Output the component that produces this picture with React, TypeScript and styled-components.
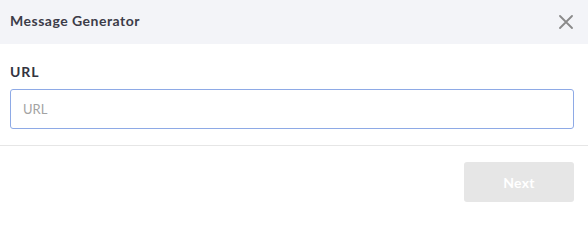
import React from "react";
import styled, { createGlobalStyle } from "styled-components";

const Global = createGlobalStyle`
  html, body { margin: 0; padding: 0; background: #ffffff; }
  body { font-family: "Lato", "Liberation Sans", sans-serif; }
  * { box-sizing: border-box; }
`;

const Modal = styled.div`
  width: 588px;
  height: 215px;
  display: flex;
  flex-direction: column;
  background: #ffffff;
`;

const Header = styled.div`
  height: 44px;
  background: #f3f4f8;
  display: flex;
  align-items: center;
  justify-content: space-between;
  padding: 0 15px 0 10px;
`;

const Title = styled.h2`
  margin: 0;
  font-size: 14px;
  font-weight: 700;
  color: #3c3c48;
  letter-spacing: 0.5px;
  line-height: 18px;
  padding-bottom: 2px;
`;

const CloseButton = styled.button`
  border: none;
  background: transparent;
  padding: 0;
  width: 14px;
  height: 14px;
  display: flex;
  align-items: center;
  justify-content: center;
  cursor: pointer;
  color: #8a8a8a;
`;

const Body = styled.div`
  padding: 20px 14px 16px 10px;
  display: flex;
  flex-direction: column;
  gap: 9px;
  border-bottom: 1px solid #e6e6e6;
`;

const Label = styled.label`
  font-size: 14px;
  font-weight: 700;
  color: #333340;
  line-height: 16px;
  letter-spacing: 0.9px;
`;

const Input = styled.input`
  width: 100%;
  height: 40px;
  border: 1px solid #8eaae6;
  border-radius: 3px;
  padding: 0 12px;
  font-family: "Lato", "Liberation Sans", sans-serif;
  font-size: 13px;
  color: #333;
  outline: none;
  &::placeholder { color: #a3a3a3; }
`;

const Footer = styled.div`
  display: flex;
  justify-content: flex-end;
  padding: 16px 14px 0 10px;
`;

const NextButton = styled.button`
  width: 110px;
  height: 40px;
  border: none;
  border-radius: 3px;
  background: #e6e6e6;
  color: #ffffff;
  font-family: "Lato", "Liberation Sans", sans-serif;
  font-size: 14px;
  font-weight: 700;
  letter-spacing: 0.3px;
`;

export default function App() {
  return (
    <>
      <Global />
      <Modal>
        <Header>
          <Title>Message Generator</Title>
          <CloseButton aria-label="Close">
            <svg width="14" height="14" viewBox="0 0 14 14">
              <path d="M1 1L13 13M13 1L1 13" stroke="currentColor" strokeWidth="1.8" strokeLinecap="round" />
            </svg>
          </CloseButton>
        </Header>
        <Body>
          <Label>URL</Label>
          <Input placeholder="URL" autoFocus />
        </Body>
        <Footer>
          <NextButton disabled>Next</NextButton>
        </Footer>
      </Modal>
    </>
  );
}
